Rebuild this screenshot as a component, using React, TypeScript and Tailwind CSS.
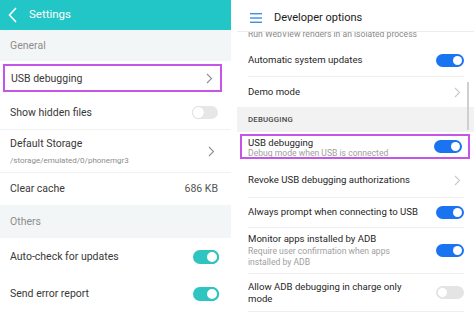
import React from "react";

const font = { fontFamily: "Roboto, 'Noto Sans', sans-serif" };

function Chevron({ light = false }: { light?: boolean }) {
  return (
    <svg width="7" height="11" viewBox="0 0 7 11" fill="none">
      <path
        d="M1 1l4.5 4.5L1 10"
        stroke={light ? "#c9c9c9" : "#8f8f8f"}
        strokeWidth="1.1"
      />
    </svg>
  );
}

function TealToggle({ on }: { on: boolean }) {
  if (!on) {
    return (
      <div className="relative w-[26px] h-[13px] rounded-full bg-[#e6e8e8]">
        <div className="absolute left-0 top-0 w-[13px] h-[13px] rounded-full bg-white border border-[#e0e0e0]" />
      </div>
    );
  }
  return (
    <div className="relative w-[26px] h-[14px] rounded-full bg-[#2ec4bf]">
      <div className="absolute right-0 top-0 w-[14px] h-[14px] rounded-full bg-white border-2 border-[#2ec4bf]" />
    </div>
  );
}

function BlueToggle({ on }: { on: boolean }) {
  if (!on) {
    return (
      <div className="relative w-[28px] h-[13px] rounded-full bg-[#e4e4e4]">
        <div className="absolute left-[2px] top-[2px] w-[9px] h-[9px] rounded-full bg-white" />
      </div>
    );
  }
  return (
    <div className="relative w-[28px] h-[13px] rounded-full bg-[#1a73f0]">
      <div className="absolute right-[2px] top-[2px] w-[9px] h-[9px] rounded-full bg-white" />
    </div>
  );
}

function LeftPanel() {
  return (
    <div className="w-[231px] shrink-0 flex flex-col bg-white text-[10.5px] text-[#383838]">
      {/* header */}
      <div className="h-[30px] bg-[#22c6c6] flex items-center px-[8px] gap-[12px]">
        <svg width="9" height="16" viewBox="0 0 9 16" fill="none">
          <path d="M8 1L1.5 8 8 15" stroke="white" strokeWidth="1.6" />
        </svg>
        <span className="text-white text-[11.5px]">Settings</span>
      </div>

      <div className="h-[32px] bg-[#f3f6f6] flex items-center px-[10px] text-[#8d8d8d]">
        General
      </div>

      <div className="h-[35px] flex items-center">
        <div className="ml-[3px] w-[219px] h-[28px] border-2 border-[#c455e6] flex items-center justify-between pl-[6px] pr-[7px]">
          <span>USB debugging</span>
          <Chevron />
        </div>
      </div>

      <div className="h-[35px] flex items-center justify-between pl-[10px] pr-[13px] border-b border-[#f0f2f2]">
        <span>Show hidden files</span>
        <TealToggle on={false} />
      </div>

      <div className="h-[43px] flex items-center justify-between pl-[10px] pr-[16px] border-b border-[#f0f2f2]">
        <div className="flex flex-col gap-[6px] pt-[2px]">
          <span className="leading-[12px]">Default Storage</span>
          <span className="text-[8px] leading-[10px] text-[#8d8d8d]">/storage/emulated/0/phonemgr3</span>
        </div>
        <Chevron />
      </div>

      <div className="h-[33px] flex items-center justify-between pl-[10px] pr-[13px]">
        <span>Clear cache</span>
        <span className="text-[#555]">686 KB</span>
      </div>

      <div className="h-[33px] bg-[#f3f6f6] flex items-center px-[10px] text-[#8d8d8d]">
        Others
      </div>

      <div className="h-[39px] flex items-center justify-between pl-[10px] pr-[12px]">
        <span>Auto-check for updates</span>
        <TealToggle on />
      </div>

      <div className="h-[36px] flex items-center justify-between pl-[10px] pr-[12px]">
        <span>Send error report</span>
        <TealToggle on />
      </div>
    </div>
  );
}

function RightPanel() {
  return (
    <div className="relative flex-1 flex flex-col bg-white text-[9.6px] text-[#1f1f1f] overflow-hidden">
      {/* header */}
      <div className="relative z-10 h-[32px] shrink-0 bg-white flex items-center pt-[5px] pl-[13px] gap-[12px] border-b border-[#ececec]">
        <svg width="12" height="10" viewBox="0 0 12 10">
          <rect x="0" y="0" width="12" height="1.4" fill="#3b8ee8" />
          <rect x="0" y="4.3" width="12" height="1.4" fill="#3b8ee8" />
          <rect x="0" y="8.6" width="12" height="1.4" fill="#3b8ee8" />
        </svg>
        <span className="text-[11px] text-[#1a1a1a]">Developer options</span>
      </div>

      <div className="h-[12px] shrink-0 overflow-hidden pl-[11px] pr-[10px]">
        <div className="-mt-[4px] text-[8.6px] text-[#8a8a8a]">
          Run WebView renders in an isolated process
        </div>
      </div>

      <div className="ml-[11px] mr-[10px]">
        <div className="h-[33px] flex items-center justify-between border-b border-[#efefef]">
          <span>Automatic system updates</span>
          <BlueToggle on />
        </div>
        <div className="h-[30px] flex items-center justify-between pr-[3px]">
          <span>Demo mode</span>
          <Chevron light />
        </div>
      </div>

      <div className="h-[25px] shrink-0 bg-[#f2f2f2] flex items-center pl-[11px] text-[7.8px] font-medium text-[#4a4a4a] tracking-[0.2px]">
        DEBUGGING
      </div>

      <div className="h-[31px] shrink-0 flex items-start pt-[2px]">
        <div className="ml-[3px] w-[230px] h-[25px] border-2 border-[#c455e6] flex items-center justify-between pl-[6px] pr-[6px] overflow-hidden">
          <div className="flex flex-col leading-[11px] pt-[3px]">
            <span>USB debugging</span>
            <span className="text-[8.6px] text-[#a0a0a0]">Debug mode when USB is connected</span>
          </div>
          <BlueToggle on />
        </div>
      </div>

      <div className="ml-[11px] mr-[10px]">
        <div className="h-[35px] flex items-center justify-between border-b border-[#efefef] pr-[3px]">
          <span>Revoke USB debugging authorizations</span>
          <Chevron light />
        </div>
        <div className="h-[30px] flex items-center justify-between border-b border-[#efefef]">
          <span>Always prompt when connecting to USB</span>
          <BlueToggle on />
        </div>
        <div className="h-[46px] flex items-center justify-between border-b border-[#efefef]">
          <div className="flex flex-col leading-[11px]">
            <span className="mb-[2px]">Monitor apps installed by ADB</span>
            <span className="text-[8.6px] text-[#a0a0a0]">Require user confirmation when apps</span>
            <span className="text-[8.6px] text-[#a0a0a0]">installed by ADB</span>
          </div>
          <BlueToggle on />
        </div>
        <div className="h-[38px] flex items-center justify-between border-b border-[#efefef]">
          <div className="flex flex-col leading-[12px]">
            <span>Allow ADB debugging in charge only</span>
            <span>mode</span>
          </div>
          <BlueToggle on={false} />
        </div>
      </div>

      {/* scrollbar */}
      <div className="absolute left-[230px] top-[82px] w-[2px] h-[48px] bg-[#cfcfcf]" />
    </div>
  );
}

export default function App() {
  return (
    <div className="w-[474px] h-[312px] flex gap-[6px] bg-white overflow-hidden" style={font}>
      <LeftPanel />
      <RightPanel />
    </div>
  );
}
